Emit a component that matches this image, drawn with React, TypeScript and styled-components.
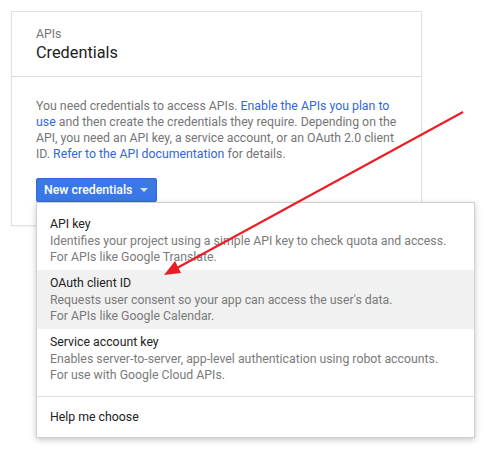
import styled, { createGlobalStyle } from "styled-components";

const GlobalStyle = createGlobalStyle`
  html, body {
    margin: 0;
    padding: 0;
    background: #ffffff;
    font-family: Roboto, "Noto Sans", Arial, sans-serif;
    -webkit-font-smoothing: antialiased;
  }
`;

const Page = styled.div`
  position: relative;
  width: 496px;
  height: 449px;
  padding: 11px;
  box-sizing: border-box;
  overflow: hidden;
`;

const Card = styled.div`
  width: 411px;
  border: 1px solid #e0e0e0;
  box-shadow: 0 1px 2px rgba(0, 0, 0, 0.06);
  box-sizing: border-box;
`;

const CardHeader = styled.div`
  padding: 15px 24px 0;
  border-bottom: 1px solid #dadada;
  height: 65px;
  box-sizing: border-box;
`;

const Eyebrow = styled.div`
  font-size: 12.3px;
  line-height: 15px;
  color: #757575;
`;

const Title = styled.h1`
  margin: 0;
  font-size: 16.3px;
  line-height: 22px;
  font-weight: 400;
  color: #212121;
`;

const CardBody = styled.div`
  padding: 21px 24px 23px;
`;

const Paragraph = styled.p`
  margin: 0;
  font-size: 12.3px;
  line-height: 16px;
  color: #757575;
`;

const Link = styled.a`
  color: #3367d6;
  text-decoration: none;
`;

const Dropdown = styled.div`
  position: relative;
  margin-top: 16px;
  width: max-content;
`;

const Button = styled.button`
  display: flex;
  align-items: center;
  gap: 8px;
  height: 24px;
  padding: 0 8px 0 7px;
  border: 1px solid #3367d6;
  border-radius: 2px;
  background: #3b78e7;
  color: #ffffff;
  font-family: inherit;
  font-size: 12.3px;
  font-weight: 500;
`;

const Caret = styled.span`
  width: 0;
  height: 0;
  border-left: 4px solid transparent;
  border-right: 4px solid transparent;
  border-top: 4px solid rgba(255, 255, 255, 0.8);
`;

const Menu = styled.div`
  position: absolute;
  left: 0;
  top: 100%;
  width: 439px;
  background: #ffffff;
  border: 1px solid #d0d0d0;
  box-shadow: 0 2px 6px rgba(0, 0, 0, 0.22);
  box-sizing: border-box;
  z-index: 2;
`;

const MenuList = styled.div`
  padding: 8px 0;
  border-bottom: 1px solid #e0e0e0;
`;

const MenuItem = styled.div<{ $active?: boolean }>`
  padding: 5px 13px;
  background: ${(p) => (p.$active ? "#f1f1f1" : "transparent")};
`;

const ItemTitle = styled.div`
  font-size: 12.3px;
  line-height: 17px;
  color: #212121;
`;

const ItemText = styled.div`
  font-size: 12.3px;
  line-height: 16px;
  color: #7a7a7a;
  white-space: nowrap;
`;

const MenuFooter = styled.div`
  height: 40px;
  display: flex;
  align-items: center;
  padding: 0 13px;
  font-size: 12.3px;
  color: #212121;
`;

const Overlay = styled.svg`
  position: absolute;
  left: 0;
  top: 0;
  pointer-events: none;
  z-index: 3;
`;

const items = [
  {
    title: "API key",
    lines: [
      "Identifies your project using a simple API key to check quota and access.",
      "For APIs like Google Translate.",
    ],
  },
  {
    title: "OAuth client ID",
    lines: [
      "Requests user consent so your app can access the user's data.",
      "For APIs like Google Calendar.",
    ],
    active: true,
  },
  {
    title: "Service account key",
    lines: [
      "Enables server-to-server, app-level authentication using robot accounts.",
      "For use with Google Cloud APIs.",
    ],
  },
];

export default function App() {
  return (
    <>
      <GlobalStyle />
      <Page>
        <Card>
          <CardHeader>
            <Eyebrow>APIs</Eyebrow>
            <Title>Credentials</Title>
          </CardHeader>
          <CardBody>
            <Paragraph>
              You need credentials to access APIs.{" "}
              <Link href="#">Enable the APIs you plan to use</Link> and then
              create the credentials they require. Depending on the API, you
              need an API key, a service account, or an OAuth 2.0 client ID.{" "}
              <Link href="#">Refer to the API documentation</Link> for details.
            </Paragraph>
            <Dropdown>
              <Button>
                New credentials
                <Caret />
              </Button>
              <Menu>
                <MenuList>
                  {items.map((it) => (
                    <MenuItem key={it.title} $active={it.active}>
                      <ItemTitle>{it.title}</ItemTitle>
                      {it.lines.map((l) => (
                        <ItemText key={l}>{l}</ItemText>
                      ))}
                    </MenuItem>
                  ))}
                </MenuList>
                <MenuFooter>Help me choose</MenuFooter>
              </Menu>
            </Dropdown>
          </CardBody>
        </Card>
        <Overlay width="496" height="449" viewBox="0 0 496 449">
          <line
            x1="463"
            y1="112"
            x2="177"
            y2="268"
            stroke="#ec1c24"
            strokeWidth="2"
          />
          <polygon points="164,275 181,273 175,261" fill="#ec1c24" />
        </Overlay>
      </Page>
    </>
  );
}
